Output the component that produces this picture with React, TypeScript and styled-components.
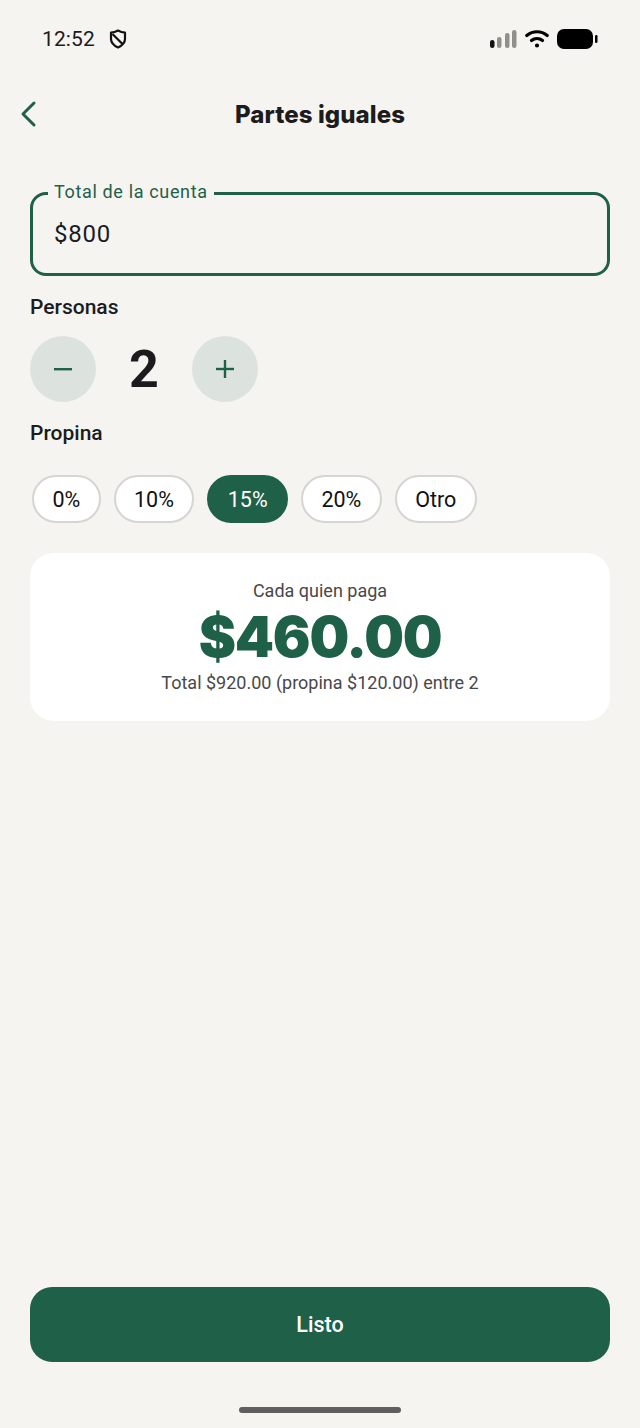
import React from 'react';
import styled, {createGlobalStyle} from 'styled-components';

const GREEN = '#1f6049';
const INK = '#1c1c1e';

const Global = createGlobalStyle`
  html, body {
    margin: 0;
    padding: 0;
    background: #f5f4f0;
  }
  * {
    box-sizing: border-box;
  }
`;

const Page = styled.div`
  width: 640px;
  height: 1428px;
  display: flex;
  flex-direction: column;
  background: #f5f4f0;
  font-family: Roboto, "Liberation Sans", sans-serif;
  color: ${INK};
`;
const StatusBar = styled.div`
  height: 78px;
  padding: 0 42px;
  display: flex;
  align-items: center;
  justify-content: space-between;
`;
const StatusGroup = styled.div<{$gap: number}>`
  display: flex;
  align-items: center;
  gap: ${(p) => p.$gap}px;
`;
const Clock = styled.span`
  font-size: 21px;
  letter-spacing: 0.1px;
`;
const Header = styled.div`
  height: 72px;
  padding: 0 18px;
  display: flex;
  align-items: center;
`;
const BackButton = styled.div`
  display: flex;
  width: 22px;
`;
const Title = styled.h1`
  flex: 1;
  margin: 0 22px 0 0;
  text-align: center;
  font-family: Inter, sans-serif;
  font-size: 24px;
  font-weight: 800;
  letter-spacing: 0.1px;
`;
const Content = styled.div`
  flex: 1;
  padding: 31px 30px 0;
  display: flex;
  flex-direction: column;
`;
const Field = styled.fieldset`
  margin: 0;
  height: 95px;
  padding: 0 21px;
  border: 3px solid ${GREEN};
  border-radius: 16px;
`;
const FieldLabel = styled.legend`
  padding: 0 6px 3px;
  margin-left: -6px;
  font-size: 18px;
  line-height: 21px;
  letter-spacing: 0.65px;
  color: ${GREEN};
`;
const FieldValue = styled.div`
  margin-top: 15px;
  font-size: 24px;
  letter-spacing: 0.8px;
`;
const SectionLabel = styled.div<{$top: number}>`
  font-size: 21px;
  font-weight: 500;
  line-height: 24px;
  margin-top: ${(p) => p.$top}px;
`;
const Stepper = styled.div`
  margin-top: 17px;
  display: flex;
  align-items: center;
`;
const RoundButton = styled.div`
  width: 66px;
  height: 66px;
  border-radius: 50%;
  background: #dce3de;
  display: flex;
  align-items: center;
  justify-content: center;
`;
const Count = styled.div`
  width: 96px;
  text-align: center;
  font-size: 52px;
  font-weight: 700;
`;
const Chips = styled.div`
  margin-top: 30px;
  padding-left: 2px;
  display: flex;
  gap: 13px;
`;
const Chip = styled.div<{$active?: boolean}>`
  height: 48px;
  padding: 0 18.4px;
  border-radius: 24px;
  display: flex;
  align-items: center;
  font-size: 21.5px;
  background: ${(p) => (p.$active ? GREEN : '#fff')};
  color: ${(p) => (p.$active ? '#fff' : '#111')};
  border: 2px solid ${(p) => (p.$active ? GREEN : '#d6d5d1')};
`;
const Card = styled.div`
  margin-top: 30px;
  height: 168px;
  border-radius: 24px;
  background: #fff;
  padding-top: 26px;
  display: flex;
  flex-direction: column;
  align-items: center;
`;
const CardCaption = styled.div`
  font-size: 18px;
  line-height: 24px;
  color: #48484a;
`;
const Amount = styled.div`
  font-family: Inter, sans-serif;
  font-size: 56px;
  font-weight: 900;
  line-height: 68px;
  letter-spacing: -1.2px;
  color: ${GREEN};
`;
const Footer = styled.div`
  padding: 0 30px;
`;
const DoneButton = styled.div`
  height: 75px;
  border-radius: 22px;
  background: ${GREEN};
  color: #fff;
  font-size: 21.5px;
  font-weight: 500;
  display: flex;
  align-items: center;
  justify-content: center;
`;
const HomeZone = styled.div`
  height: 66px;
  display: flex;
  justify-content: center;
  padding-top: 45px;
`;
const HomeBar = styled.div`
  width: 162px;
  height: 6px;
  border-radius: 3px;
  background: #5f5f5f;
`;

const tips = ['0%', '10%', '15%', '20%', 'Otro'];

const App = () => {
    return (
        <Page>
            <Global/>
            <StatusBar>
                <StatusGroup $gap={14}>
                    <Clock>12:52</Clock>
                    <svg width="18" height="20" viewBox="0 0 18 20" fill="none" stroke="#111" strokeWidth="2.2" strokeLinejoin="round">
                        <path d="M9 1.5c2.4 1.4 4.6 2 7 2.2V10c0 3.8-3 6.6-7 8.5C5 16.6 2 13.8 2 10V3.7c2.4-.2 4.6-.8 7-2.2z"/>
                        <path d="M3.5 5l10 10"/>
                    </svg>
                </StatusGroup>
                <StatusGroup $gap={8}>
                    <svg width="27" height="20" viewBox="0 0 27 20">
                        <rect x="0" y="11" width="4.5" height="8" rx="2.2" fill="#111"/>
                        <rect x="7" y="8" width="4.5" height="11" rx="2.2" fill="#8f8f8c"/>
                        <rect x="15" y="4" width="4.5" height="15" rx="2.2" fill="#8f8f8c"/>
                        <rect x="22" y="1" width="4.5" height="18" rx="2.2" fill="#8f8f8c"/>
                    </svg>
                    <svg width="24" height="20" viewBox="0 0 24 20" fill="none" stroke="#000" strokeWidth="3.2" strokeLinecap="round">
                        <path d="M1.8 6.5c6-5 14.4-5 20.4 0"/>
                        <path d="M6.5 11.5c3.2-2.6 7.8-2.6 11 0"/>
                        <circle cx="12" cy="16.5" r="1.3" fill="#000" strokeWidth="1.6"/>
                    </svg>
                    <svg width="41" height="20" viewBox="0 0 41 20">
                        <rect x="0" y="0" width="36" height="20" rx="7" fill="#000"/>
                        <rect x="38" y="6" width="2.5" height="8" rx="1.2" fill="#000"/>
                    </svg>
                </StatusGroup>
            </StatusBar>
            <Header>
                <BackButton>
                    <svg width="22" height="28" viewBox="0 0 22 28" fill="none" stroke={GREEN} strokeWidth="3" strokeLinecap="round" strokeLinejoin="round">
                        <path d="M16 3L5 14l11 11"/>
                    </svg>
                </BackButton>
                <Title>Partes iguales</Title>
            </Header>
            <Content>
                <Field>
                    <FieldLabel>Total de la cuenta</FieldLabel>
                    <FieldValue>$800</FieldValue>
                </Field>
                <SectionLabel $top={19}>Personas</SectionLabel>
                <Stepper>
                    <RoundButton>
                        <svg width="20" height="4" viewBox="0 0 20 4"><rect x="1" y="1" width="18" height="2.4" fill={GREEN}/></svg>
                    </RoundButton>
                    <Count>2</Count>
                    <RoundButton>
                        <svg width="20" height="20" viewBox="0 0 20 20" fill={GREEN}>
                            <rect x="1" y="8.8" width="18" height="2.4"/>
                            <rect x="8.8" y="1" width="2.4" height="18"/>
                        </svg>
                    </RoundButton>
                </Stepper>
                <SectionLabel $top={19}>Propina</SectionLabel>
                <Chips>
                    {tips.map((t) => (
                        <Chip key={t} $active={t === '15%'}>{t}</Chip>
                    ))}
                </Chips>
                <Card>
                    <CardCaption>Cada quien paga</CardCaption>
                    <Amount>$460.00</Amount>
                    <CardCaption>Total $920.00 (propina $120.00) entre 2</CardCaption>
                </Card>
            </Content>
            <Footer>
                <DoneButton>Listo</DoneButton>
            </Footer>
            <HomeZone>
                <HomeBar/>
            </HomeZone>
        </Page>
    );
}

export default App;
